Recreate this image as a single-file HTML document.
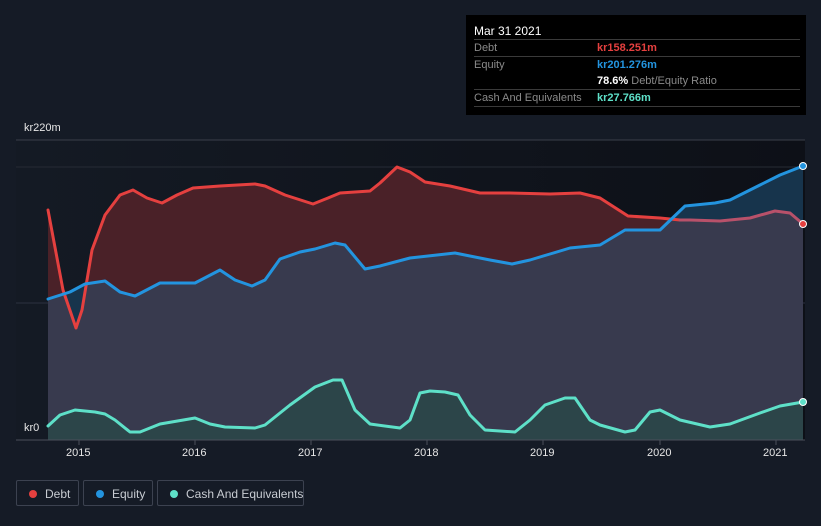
<!DOCTYPE html>
<html><head><meta charset="utf-8"><style>
html,body{margin:0;width:821px;height:526px;overflow:hidden}
body{background:#151b26;font-family:"Liberation Sans",sans-serif;position:relative}
.tip{position:absolute;left:466px;top:15px;width:340px;height:100px;background:#000;}
.tip .t{position:absolute;left:8px;top:9px;color:#fff;font-size:12px}
.row{position:absolute;left:8px;width:326px;border-top:1px solid #3a3a3a;font-size:11px;height:16px;line-height:16px;white-space:nowrap}
.row .l{position:absolute;left:0;color:#8a8a8a}
.row .v{position:absolute;left:123px;font-weight:bold}
.leg{position:absolute;top:480px;height:26px;border:1px solid #3c4250;border-radius:2px;color:#c8ccd2;font-size:12px;line-height:26px;box-sizing:border-box;white-space:nowrap}
.leg i{position:absolute;left:12px;top:9px;width:8px;height:8px;border-radius:50%}
.leg span{position:absolute;left:28px}
.ax{position:absolute;color:#e6e6e6;font-size:11px;white-space:nowrap}
</style></head><body>
<svg width="821" height="526" style="position:absolute;left:0;top:0">
<defs>
<linearGradient id="bg" x1="0" x2="1"><stop offset="0" stop-color="#141a24"/><stop offset="1" stop-color="#0d1017"/></linearGradient>
<clipPath id="dc"><path d="M48,210 L63,290 L76,328 L82,310 L92,250 L105,215 L120,195 L133,190 L147,198 L162,203 L177,195 L193,188 L220,186 L255,184 L265,186 L285,195 L313,204 L328,198 L340,193 L370,191 L380,183 L397,167 L410,172 L425,182 L450,186 L480,193 L510,193 L550,194 L580,193 L600,198 L628,216 L660,218 L690,220 L720,221 L750,218 L775,211 L790,213 L803,224 L803,440 L48,440Z"/></clipPath>
</defs>
<rect x="16" y="140" width="789" height="300" fill="url(#bg)"/>
<line x1="16" y1="140" x2="805" y2="140" stroke="#3a3f4a"/>
<line x1="16" y1="167" x2="805" y2="167" stroke="#262b35"/>
<line x1="16" y1="303" x2="805" y2="303" stroke="#2c3140"/>
<path d="M48,210 L63,290 L76,328 L82,310 L92,250 L105,215 L120,195 L133,190 L147,198 L162,203 L177,195 L193,188 L220,186 L255,184 L265,186 L285,195 L313,204 L328,198 L340,193 L370,191 L380,183 L397,167 L410,172 L425,182 L450,186 L480,193 L510,193 L550,194 L580,193 L600,198 L628,216 L660,218 L690,220 L720,221 L750,218 L775,211 L790,213 L803,224 L803,440 L48,440Z" fill="#4a2128"/>
<path d="M48,299 L70,292 L85,284 L105,281 L120,292 L135,296 L160,283 L195,283 L220,270 L235,280 L252,286 L265,280 L280,259 L300,252 L315,249 L335,243 L345,245 L365,269 L380,266 L410,258 L455,253 L490,260 L512,264 L530,260 L550,254 L570,248 L600,245 L625,230 L660,230 L685,206 L715,203 L730,200 L760,185 L780,175 L803,166 L803,440 L48,440Z" fill="#17344c"/>
<path d="M48,299 L70,292 L85,284 L105,281 L120,292 L135,296 L160,283 L195,283 L220,270 L235,280 L252,286 L265,280 L280,259 L300,252 L315,249 L335,243 L345,245 L365,269 L380,266 L410,258 L455,253 L490,260 L512,264 L530,260 L550,254 L570,248 L600,245 L625,230 L660,230 L685,206 L715,203 L730,200 L760,185 L780,175 L803,166 L803,440 L48,440Z" fill="#383a4e" clip-path="url(#dc)"/>
<path d="M48,426 L60,415 L75,410 L95,412 L105,414 L115,420 L130,432 L140,432 L160,424 L195,418 L210,424 L225,427 L255,428 L265,425 L290,405 L315,387 L333,380 L342,380 L355,410 L370,424 L400,428 L410,420 L420,393 L430,391 L445,392 L458,395 L470,415 L485,430 L515,432 L530,420 L545,405 L565,398 L575,398 L590,420 L600,425 L625,432 L635,430 L650,412 L660,410 L680,420 L710,427 L730,424 L760,413 L780,406 L803,402 L803,440 L48,440Z" fill="#2c4549"/>
<g fill="none" stroke-width="3" stroke-linejoin="round" stroke-linecap="round">
<path d="M48,210 L63,290 L76,328 L82,310 L92,250 L105,215 L120,195 L133,190 L147,198 L162,203 L177,195 L193,188 L220,186 L255,184 L265,186 L285,195 L313,204 L328,198 L340,193 L370,191 L380,183 L397,167 L410,172 L425,182 L450,186 L480,193 L510,193 L550,194 L580,193 L600,198 L628,216 L660,218 L680,220" stroke="#e5403f"/>
<path d="M680,220 L690,220 L720,221 L750,218 L775,211 L790,213 L803,224" stroke="#b8516a"/>
<path d="M48,299 L70,292 L85,284 L105,281 L120,292 L135,296 L160,283 L195,283 L220,270 L235,280 L252,286 L265,280 L280,259 L300,252 L315,249 L335,243 L345,245 L365,269 L380,266 L410,258 L455,253 L490,260 L512,264 L530,260 L550,254 L570,248 L600,245 L625,230 L660,230 L685,206 L715,203 L730,200 L760,185 L780,175 L803,166" stroke="#2394df"/>
<path d="M48,426 L60,415 L75,410 L95,412 L105,414 L115,420 L130,432 L140,432 L160,424 L195,418 L210,424 L225,427 L255,428 L265,425 L290,405 L315,387 L333,380 L342,380 L355,410 L370,424 L400,428 L410,420 L420,393 L430,391 L445,392 L458,395 L470,415 L485,430 L515,432 L530,420 L545,405 L565,398 L575,398 L590,420 L600,425 L625,432 L635,430 L650,412 L660,410 L680,420 L710,427 L730,424 L760,413 L780,406 L803,402" stroke="#5ee0c8"/>
</g>
<circle cx="803" cy="166" r="3.5" fill="#2394df" stroke="#fff" stroke-width="1"/>
<circle cx="803" cy="224" r="3.5" fill="#e5403f" stroke="#fff" stroke-width="1"/>
<circle cx="803" cy="402" r="3.5" fill="#5ee0c8" stroke="#fff" stroke-width="1"/>
<line x1="16" y1="440" x2="805" y2="440" stroke="#4a4f5a"/>
<g stroke="#4a4f5a"><line x1="79" y1="440" x2="79" y2="445"/><line x1="195" y1="440" x2="195" y2="445"/><line x1="311" y1="440" x2="311" y2="445"/><line x1="427" y1="440" x2="427" y2="445"/><line x1="543" y1="440" x2="543" y2="445"/><line x1="660" y1="440" x2="660" y2="445"/><line x1="776" y1="440" x2="776" y2="445"/></g>
</svg>
<div class="ax" style="left:24px;top:122px">kr220m</div>
<div class="ax" style="left:24px;top:422px">kr0</div>
<div class="ax" style="left:66px;top:447px">2015</div>
<div class="ax" style="left:182px;top:447px">2016</div>
<div class="ax" style="left:298px;top:447px">2017</div>
<div class="ax" style="left:414px;top:447px">2018</div>
<div class="ax" style="left:530px;top:447px">2019</div>
<div class="ax" style="left:647px;top:447px">2020</div>
<div class="ax" style="left:763px;top:447px">2021</div>
<div class="tip">
<div class="t">Mar 31 2021</div>
<div class="row" style="top:24px"><span class="l">Debt</span><span class="v" style="color:#e5403f">kr158.251m</span></div>
<div class="row" style="top:41px"><span class="l">Equity</span><span class="v" style="color:#2394df">kr201.276m</span></div>
<div class="row" style="top:58px;border-top:none"><span class="v" style="color:#fff">78.6% <b style="color:#8a8a8a;font-weight:normal">Debt/Equity Ratio</b></span></div>
<div class="row" style="top:74px;border-bottom:1px solid #3a3a3a"><span class="l">Cash And Equivalents</span><span class="v" style="color:#5ee0c8">kr27.766m</span></div>
</div>
<div class="leg" style="left:16px;width:63px"><i style="background:#e5403f"></i><span>Debt</span></div>
<div class="leg" style="left:83px;width:70px"><i style="background:#2394df"></i><span>Equity</span></div>
<div class="leg" style="left:157px;width:147px"><i style="background:#5ee0c8"></i><span>Cash And Equivalents</span></div>
</body></html>
